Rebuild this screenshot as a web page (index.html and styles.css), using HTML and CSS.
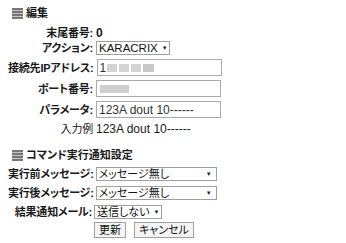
FILE: index.html
```html
<!DOCTYPE html>
<html lang="ja">
<head>
<meta charset="utf-8">
<link rel="stylesheet" href="styles.css">
</head>
<body>
<div class="page">
  <div class="sec-head">
    <span class="sec-icon"><i></i><i></i><i></i><i></i></span>
    <span>編集</span>
  </div>
  <div class="form form-a">
    <div class="row h14">
      <div class="lbl">末尾番号:</div>
      <div class="val bold">0</div>
    </div>
    <div class="row h14 gap1">
      <div class="lbl">アクション:</div>
      <div class="val"><span class="sel sel-action"><span class="lat">KARACRIX</span><span class="arr">▼</span></span></div>
    </div>
    <div class="row h17 gap">
      <div class="lbl">接続先IPアドレス:</div>
      <div class="val"><span class="inp">1<span class="blur b1"></span><span class="blur b2"></span><span class="blur b3"></span><span class="blur b4"></span></span></div>
    </div>
    <div class="row h17 gap">
      <div class="lbl">ポート番号:</div>
      <div class="val"><span class="inp"><span class="blur b5"></span></span></div>
    </div>
    <div class="row h17 gap">
      <div class="lbl">パラメータ:</div>
      <div class="val"><span class="inp">123A dout 10------</span></div>
    </div>
    <div class="row h14 gap">
      <div class="lbl normal">入力例</div>
      <div class="val">123A dout 10------</div>
    </div>
  </div>

  <div class="sec-head sec-two">
    <span class="sec-icon"><i></i><i></i><i></i><i></i></span>
    <span>コマンド実行通知設定</span>
  </div>
  <div class="form form-b">
    <div class="row h14">
      <div class="lbl">実行前メッセージ:</div>
      <div class="val"><span class="sel sel-msg">メッセージ無し<span class="arr">▼</span></span></div>
    </div>
    <div class="row h14 gapb">
      <div class="lbl">実行後メッセージ:</div>
      <div class="val"><span class="sel sel-msg">メッセージ無し<span class="arr">▼</span></span></div>
    </div>
    <div class="row h14 gapb">
      <div class="lbl">結果通知メール:</div>
      <div class="val"><span class="sel sel-mail">送信しない<span class="arr">▼</span></span></div>
    </div>
    <div class="row btn-row">
      <div class="lbl"></div>
      <div class="val btns"><span class="btn">更新</span><span class="btn">キャンセル</span></div>
    </div>
  </div>
</div>
</body>
</html>
```

FILE: styles.css
```css
* { box-sizing: border-box; }
body {
  margin: 0;
  background: #fff;
  color: #1a1a1a;
  font-family: "Liberation Sans", "Noto Sans CJK JP", sans-serif;
  font-size: 12px;
  font-feature-settings: "palt";
}
.page {
  padding: 7px 0 0 8px;
}
.sec-head {
  display: flex;
  align-items: center;
  gap: 3px;
  padding-left: 4px;
  height: 13px;
  font-weight: bold;
  font-size: 11px;
  line-height: 13px;
}
.sec-two {
  margin-top: 13px;
}
.sec-icon {
  display: flex;
  flex-direction: column;
  gap: 1px;
  width: 11px;
  background: #c4c4c4;
}
.sec-icon i {
  display: block;
  height: 2px;
  background: #767676;
}
.form-a { margin-top: 6px; }
.form-b { margin-top: 5px; }
.row {
  display: flex;
  align-items: center;
}
.h14 { height: 14px; }
.h17 { height: 17px; }
.gap1 { margin-top: 1px; }
.gap { margin-top: 4px; }
.gapb { margin-top: 5px; }
.lbl {
  flex: 0 0 85px;
  text-align: right;
  font-weight: bold;
  font-size: 11px;
  white-space: nowrap;
  line-height: 14px;
  letter-spacing: -0.2px;
}
.form-a .lbl { margin-right: 3px; }
.form-b .lbl { flex-basis: 84px; margin-right: 2px; }
.lbl.normal { font-weight: normal; }
.val {
  line-height: 14px;
  white-space: nowrap;
}
.bold { font-weight: bold; }
.sel {
  display: inline-flex;
  align-items: center;
  justify-content: space-between;
  height: 14px;
  border: 1px solid #a0a0a0;
  padding: 0 4px 0 2px;
  line-height: 12px;
  font-size: 11px;
  background: #fff;
  color: #111;
}
.lat { font-size: 11.5px; }
.arr {
  font-size: 6px;
  margin-left: 4px;
  color: #222;
}
.sel-action { width: 74px; }
.sel-msg { width: 121px; }
.sel-mail { width: 68px; }
.inp {
  display: flex;
  align-items: center;
  width: 125px;
  height: 17px;
  border: 1px solid #a9a9a9;
  padding: 0 2px;
  color: #333;
}
.blur {
  display: inline-block;
  height: 8px;
  background: #d4d4d4;
  margin-right: 2px;
}
.b1 { width: 10px; margin-left: 1px; }
.b2 { width: 10px; }
.b3 { width: 10px; }
.b4 { width: 11px; background: #c8c8c8; }
.b5 { width: 29px; background: #cfcfcf; margin-left: 1px; }
.btn-row { margin-top: 3px; }
.btns {
  display: flex;
  gap: 8px;
}
.btn {
  display: inline-flex;
  align-items: center;
  justify-content: center;
  height: 16px;
  padding: 0 4px;
  border: 1px solid #a0a0a0;
  background: #f4f4f4;
  color: #111;
  font-size: 11px;
  line-height: 14px;
}
```
